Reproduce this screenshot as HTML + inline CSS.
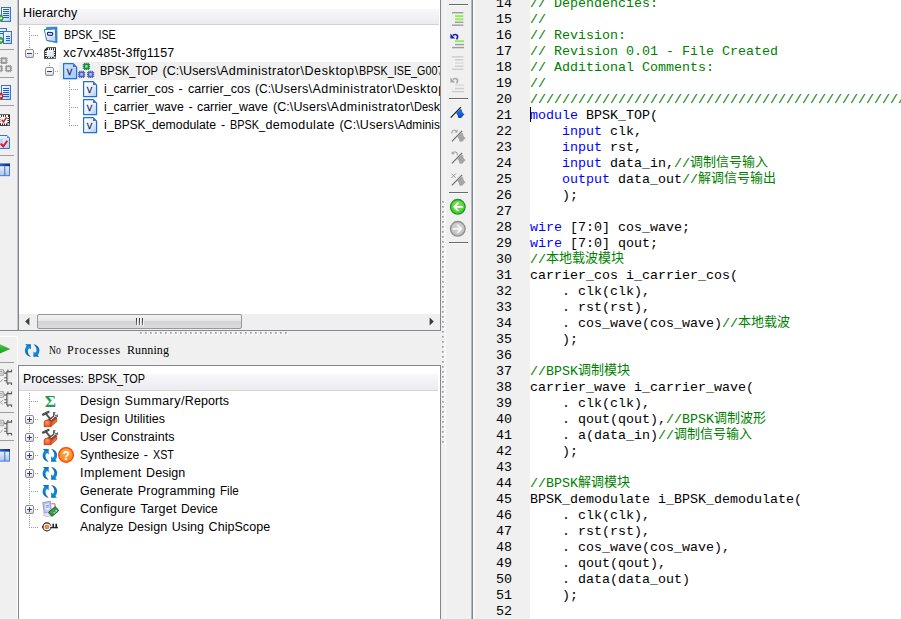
<!DOCTYPE html>
<html lang="zh"><head><meta charset="utf-8"><title>ISE Project Navigator</title>
<style>
html,body{margin:0;padding:0;}
body{width:901px;height:619px;overflow:hidden;background:#f0f0f0;position:relative;font-family:"Liberation Sans", "Noto Sans CJK SC", sans-serif;font-size:12.5px;color:#000;}
.abs{position:absolute;}
.ui{position:absolute;white-space:pre;line-height:18px;height:18px;}
.code{position:absolute;left:530px;white-space:pre;font-family:"Liberation Mono", "Noto Sans CJK SC", monospace;font-size:13.3333px;line-height:16px;height:16px;color:#000;}
.ln{position:absolute;left:474px;width:38px;text-align:right;font-family:"Liberation Mono", "Noto Sans CJK SC", monospace;font-size:13.3333px;line-height:16px;height:16px;color:#000;}
.c{color:#008000;} .k{color:#0000ff;} .z{color:#008000;font-size:13px;line-height:0;position:relative;top:-1.5px;font-family:"Liberation Sans","Noto Sans CJK SC",sans-serif;}
svg{position:absolute;overflow:visible;}
</style></head><body>


<!-- left tool strip -->
<div class="abs" style="left:17px;top:0;width:1px;height:331px;background:#c3c6cb;"></div>
<div class="abs" style="left:18px;top:0;width:1px;height:331px;background:#7f8590;"></div>
<div class="abs" style="left:0;top:330px;width:441px;height:1px;background:#828790;"></div>
<!-- hierarchy panel -->
<div class="abs" id="hier" style="left:19px;top:0;width:421px;height:330px;background:#fff;"></div>
<div class="abs" style="left:440px;top:0;width:1px;height:331px;background:#828790;"></div>
<div class="abs" style="left:19px;top:9px;width:420px;height:15px;background:linear-gradient(#f8f8fa,#ececf0);"></div>
<div class="abs" style="left:19px;top:24px;width:420px;height:1px;background:#d2d2d2;"></div>

<div class="abs" style="left:59px;top:62px;width:381px;height:18px;background:#f0f0f0;"></div>
<div class="abs" style="left:19px;top:25px;width:421px;height:289px;overflow:hidden;">
<span class="ui" style="left:44.7px;top:1.0px;transform-origin:0 0;transform:scaleX(0.8552);">BPSK_ISE</span>
<span class="ui" style="left:44.3px;top:19.0px;letter-spacing:0.179px;">xc7vx485t-3ffg1157</span>
<span class="ui" style="left:81.0px;top:37.0px;transform-origin:0 0;transform:scaleX(0.8787);">BPSK_TOP </span><span class="ui" style="left:143.4px;top:37.0px;letter-spacing:0.135px;">(C:\Users\</span><span class="ui" style="left:201.0px;top:37.0px;letter-spacing:0.521px;">Administrator\</span><span class="ui" style="left:285.4px;top:37.0px;letter-spacing:0.632px;">Desktop\</span><span class="ui" style="left:339.8px;top:37.0px;transform-origin:0 0;transform:scaleX(0.8612);">BPSK_ISE_G00</span><span class="ui" style="left:418.2px;top:37.0px;letter-spacing:0.5px;">7</span>
<span class="ui" style="left:85.0px;top:55.0px;transform-origin:0 0;transform:scaleX(0.9754);">i_carrier_cos </span><span class="ui" style="left:159.4px;top:55.0px;letter-spacing:0.828px;">- </span><span class="ui" style="left:169.0px;top:55.0px;letter-spacing:0.052px;">carrier_cos </span><span class="ui" style="left:236.0px;top:55.0px;transform-origin:0 0;transform:scaleX(0.9632);">(C:\</span><span class="ui" style="left:255.4px;top:55.0px;letter-spacing:0.312px;">Users\</span><span class="ui" style="left:293.4px;top:55.0px;letter-spacing:0.492px;">Administrator\</span><span class="ui" style="left:377.4px;top:55.0px;letter-spacing:0.482px;">Deskto</span><span class="ui" style="left:419.2px;top:55.0px;letter-spacing:0.5px;">p\BPSK</span>
<span class="ui" style="left:85.0px;top:73.0px;transform-origin:0 0;transform:scaleX(0.9818);">i_carrier_wave </span><span class="ui" style="left:169.4px;top:73.0px;letter-spacing:0.228px;">- </span><span class="ui" style="left:178.4px;top:73.0px;transform-origin:0 0;transform:scaleX(0.9907);">carrier_wave </span><span class="ui" style="left:253.9px;top:73.0px;letter-spacing:0.090px;">(C:\</span><span class="ui" style="left:274.4px;top:73.0px;letter-spacing:0.179px;">Users\</span><span class="ui" style="left:311.6px;top:73.0px;letter-spacing:0.464px;">Administrator\</span><span class="ui" style="left:395.2px;top:73.0px;transform-origin:0 0;transform:scaleX(0.8815);">Des</span><span class="ui" style="left:414.8px;top:73.0px;letter-spacing:0.5px;">ktop\</span>
<span class="ui" style="left:85.0px;top:91.0px;letter-spacing:0.333px;">i_</span><span class="ui" style="left:95.4px;top:91.0px;transform-origin:0 0;transform:scaleX(0.9426);">BPSK_</span><span class="ui" style="left:133.4px;top:91.0px;transform-origin:0 0;transform:scaleX(0.9797);">demodulate </span><span class="ui" style="left:202.0px;top:91.0px;letter-spacing:0.628px;">- </span><span class="ui" style="left:211.4px;top:91.0px;transform-origin:0 0;transform:scaleX(0.8682);">BPSK_</span><span class="ui" style="left:246.4px;top:91.0px;letter-spacing:0.407px;">demodulate </span><span class="ui" style="left:320.4px;top:91.0px;letter-spacing:0.065px;">(C:\</span><span class="ui" style="left:340.8px;top:91.0px;letter-spacing:0.346px;">Users\</span><span class="ui" style="left:379.0px;top:91.0px;transform-origin:0 0;transform:scaleX(0.9400);">Adminis</span><span class="ui" style="left:420.8px;top:91.0px;letter-spacing:0.5px;">trator</span>
</div>
<span class="ui" style="left:23.0px;top:3.5px;letter-spacing:0.100px;">Hierarchy</span>

<div class="abs" style="left:19px;top:314px;width:421px;height:16px;background:#efefef;"></div>
<div class="abs" style="left:37px;top:314px;width:205px;height:15px;box-sizing:border-box;border:1px solid #979797;border-radius:2px;background:linear-gradient(#f4f4f4 0%,#e6e6e6 45%,#d4d4d4 50%,#dcdcdc 100%);"></div>


<div class="abs" style="left:17px;top:336px;width:1px;height:283px;background:#fff;"></div>
<div class="abs" style="left:0;top:336px;width:18px;height:1px;background:#fff;"></div>
<div class="abs" style="left:0;top:343px;width:300px;height:14px;font-family:'Liberation Serif','Noto Serif CJK SC',serif;font-size:12px;line-height:14px;white-space:pre;color:#000;">
<span class="abs" style="left:49px;top:0;transform-origin:0 0;transform:scaleX(0.8);">No</span>
<span class="abs" style="left:67px;top:0;letter-spacing:0.8px;">Processes</span>
<span class="abs" style="left:127px;top:0;letter-spacing:0.1px;">Running</span>
</div>
<!-- processes panel -->
<div class="abs" style="left:18px;top:365px;width:423px;height:254px;background:#828790;"></div>
<div class="abs" style="left:19px;top:366px;width:421px;height:253px;background:#fff;"></div>
<div class="abs" style="left:19px;top:374px;width:419px;height:16px;background:linear-gradient(#f8f8fa,#ececf0);"></div>
<div class="abs" style="left:19px;top:390px;width:419px;height:1px;background:#d6d6d6;"></div>

<span class="ui" style="left:22.8px;top:370.3px;transform-origin:0 0;transform:scaleX(0.9864);">Processes: </span><span class="ui" style="left:88.4px;top:370.3px;transform-origin:0 0;transform:scaleX(0.8665);">BPSK_TOP</span>
<span class="ui" style="left:80.1px;top:392.0px;letter-spacing:0.130px;">Design </span><span class="ui" style="left:124.4px;top:392.0px;letter-spacing:0.431px;">Summary/</span><span class="ui" style="left:184.8px;top:392.0px;letter-spacing:0.086px;">Reports</span>
<span class="ui" style="left:80.1px;top:410.0px;letter-spacing:0.130px;">Design </span><span class="ui" style="left:124.4px;top:410.0px;letter-spacing:0.038px;">Utilities</span>
<span class="ui" style="left:80.1px;top:428.0px;transform-origin:0 0;transform:scaleX(0.9884);">User </span><span class="ui" style="left:110.8px;top:428.0px;letter-spacing:0.037px;">Constraints</span>
<span class="ui" style="left:79.9px;top:446.0px;transform-origin:0 0;transform:scaleX(0.9696);">Synthesize </span><span class="ui" style="left:143.8px;top:446.0px;letter-spacing:0.328px;">- </span><span class="ui" style="left:152.9px;top:446.0px;transform-origin:0 0;transform:scaleX(0.8596);">XST</span>
<span class="ui" style="left:80.1px;top:464.0px;letter-spacing:0.338px;">Implement </span><span class="ui" style="left:146.1px;top:464.0px;letter-spacing:0.036px;">Design</span>
<span class="ui" style="left:79.9px;top:482.0px;letter-spacing:0.134px;">Generate </span><span class="ui" style="left:137.7px;top:482.0px;letter-spacing:0.243px;">Programming </span><span class="ui" style="left:220.0px;top:482.0px;transform-origin:0 0;transform:scaleX(0.9278);">File</span>
<span class="ui" style="left:79.9px;top:500.0px;letter-spacing:0.189px;">Configure </span><span class="ui" style="left:140.4px;top:500.0px;letter-spacing:0.275px;">Target </span><span class="ui" style="left:181.4px;top:500.0px;transform-origin:0 0;transform:scaleX(0.9629);">Device</span>
<span class="ui" style="left:79.9px;top:518.0px;transform-origin:0 0;transform:scaleX(0.9756);">Analyze </span><span class="ui" style="left:127.9px;top:518.0px;letter-spacing:0.063px;">Design </span><span class="ui" style="left:171.8px;top:518.0px;letter-spacing:0.046px;">Using </span><span class="ui" style="left:208.6px;top:518.0px;letter-spacing:0.043px;">ChipScope</span>

<div class="abs" style="left:471px;top:0;width:1px;height:619px;background:#b4b7bc;"></div>
<div class="abs" style="left:472px;top:0;width:1px;height:619px;background:#7f848d;"></div>
<div class="abs" style="left:473px;top:0;width:2px;height:619px;background:#f8f8f8;"></div>
<div class="abs" style="left:530px;top:0;width:371px;height:619px;background:#fff;"></div>

<div class="ln" style="top:-4px;">14</div>
<div class="code" style="top:-4px;"><span class="c">// Dependencies:</span></div>
<div class="ln" style="top:12px;">15</div>
<div class="code" style="top:12px;"><span class="c">//</span></div>
<div class="ln" style="top:28px;">16</div>
<div class="code" style="top:28px;"><span class="c">// Revision:</span></div>
<div class="ln" style="top:44px;">17</div>
<div class="code" style="top:44px;"><span class="c">// Revision 0.01 - File Created</span></div>
<div class="ln" style="top:60px;">18</div>
<div class="code" style="top:60px;"><span class="c">// Additional Comments:</span></div>
<div class="ln" style="top:76px;">19</div>
<div class="code" style="top:76px;"><span class="c">//</span></div>
<div class="ln" style="top:92px;">20</div>
<div class="code" style="top:92px;"><span class="c">//////////////////////////////////////////////////////////////////////////////////</span></div>
<div class="ln" style="top:108px;">21</div>
<div class="code" style="top:108px;"><span class="k">module</span> BPSK_TOP(</div>
<div class="ln" style="top:124px;">22</div>
<div class="code" style="top:124px;">    <span class="k">input</span> clk,</div>
<div class="ln" style="top:140px;">23</div>
<div class="code" style="top:140px;">    <span class="k">input</span> rst,</div>
<div class="ln" style="top:156px;">24</div>
<div class="code" style="top:156px;">    <span class="k">input</span> data_in,<span class="c">//</span><span class="z">调制信号输入</span></div>
<div class="ln" style="top:172px;">25</div>
<div class="code" style="top:172px;">    <span class="k">output</span> data_out<span class="c">//</span><span class="z">解调信号输出</span></div>
<div class="ln" style="top:188px;">26</div>
<div class="code" style="top:188px;">    );</div>
<div class="ln" style="top:204px;">27</div>
<div class="ln" style="top:220px;">28</div>
<div class="code" style="top:220px;"><span class="k">wire</span> [7:0] cos_wave;</div>
<div class="ln" style="top:236px;">29</div>
<div class="code" style="top:236px;"><span class="k">wire</span> [7:0] qout;</div>
<div class="ln" style="top:252px;">30</div>
<div class="code" style="top:252px;"><span class="c">//</span><span class="z">本地载波模块</span></div>
<div class="ln" style="top:268px;">31</div>
<div class="code" style="top:268px;">carrier_cos i_carrier_cos(</div>
<div class="ln" style="top:284px;">32</div>
<div class="code" style="top:284px;">    . clk(clk),</div>
<div class="ln" style="top:300px;">33</div>
<div class="code" style="top:300px;">    . rst(rst),</div>
<div class="ln" style="top:316px;">34</div>
<div class="code" style="top:316px;">    . cos_wave(cos_wave)<span class="c">//</span><span class="z">本地载波</span></div>
<div class="ln" style="top:332px;">35</div>
<div class="code" style="top:332px;">    );</div>
<div class="ln" style="top:348px;">36</div>
<div class="ln" style="top:364px;">37</div>
<div class="code" style="top:364px;"><span class="c">//BPSK</span><span class="z">调制模块</span></div>
<div class="ln" style="top:380px;">38</div>
<div class="code" style="top:380px;">carrier_wave i_carrier_wave(</div>
<div class="ln" style="top:396px;">39</div>
<div class="code" style="top:396px;">    . clk(clk),</div>
<div class="ln" style="top:412px;">40</div>
<div class="code" style="top:412px;">    . qout(qout),<span class="c">//BPSK</span><span class="z">调制波形</span></div>
<div class="ln" style="top:428px;">41</div>
<div class="code" style="top:428px;">    . a(data_in)<span class="c">//</span><span class="z">调制信号输入</span></div>
<div class="ln" style="top:444px;">42</div>
<div class="code" style="top:444px;">    );</div>
<div class="ln" style="top:460px;">43</div>
<div class="ln" style="top:476px;">44</div>
<div class="code" style="top:476px;"><span class="c">//BPSK</span><span class="z">解调模块</span></div>
<div class="ln" style="top:492px;">45</div>
<div class="code" style="top:492px;">BPSK_demodulate i_BPSK_demodulate(</div>
<div class="ln" style="top:508px;">46</div>
<div class="code" style="top:508px;">    . clk(clk),</div>
<div class="ln" style="top:524px;">47</div>
<div class="code" style="top:524px;">    . rst(rst),</div>
<div class="ln" style="top:540px;">48</div>
<div class="code" style="top:540px;">    . cos_wave(cos_wave),</div>
<div class="ln" style="top:556px;">49</div>
<div class="code" style="top:556px;">    . qout(qout),</div>
<div class="ln" style="top:572px;">50</div>
<div class="code" style="top:572px;">    . data(data_out)</div>
<div class="ln" style="top:588px;">51</div>
<div class="code" style="top:588px;">    );</div>
<div class="ln" style="top:604px;">52</div>
<div class="abs" style="left:530px;top:107px;width:1px;height:15px;background:#000;"></div>
<svg width="901" height="619" viewBox="0 0 901 619" style="left:0;top:0;">
<defs>
<linearGradient id="gdoc" x1="0" y1="0" x2="1" y2="1"><stop offset="0" stop-color="#ffffff"/><stop offset="1" stop-color="#b3cdf1"/></linearGradient>
<linearGradient id="gbox" x1="0" y1="0" x2="0" y2="1"><stop offset="0" stop-color="#ffffff"/><stop offset="0.5" stop-color="#f4f4f4"/><stop offset="1" stop-color="#cfcfcf"/></linearGradient>
<linearGradient id="gplay" x1="0" y1="0" x2="0" y2="1"><stop offset="0" stop-color="#55d455"/><stop offset="1" stop-color="#0b8f12"/></linearGradient>
<radialGradient id="ggreen" cx="0.5" cy="0.4" r="0.7"><stop offset="0" stop-color="#86e660"/><stop offset="0.7" stop-color="#52cc3a"/><stop offset="1" stop-color="#2aa824"/></radialGradient>
<radialGradient id="ggray" cx="0.5" cy="0.4" r="0.7"><stop offset="0" stop-color="#d6d6d6"/><stop offset="0.7" stop-color="#c2c2c2"/><stop offset="1" stop-color="#a2a2a2"/></radialGradient>
<linearGradient id="gtab" x1="0" y1="0" x2="0" y2="1"><stop offset="0" stop-color="#f4f8ff"/><stop offset="1" stop-color="#a9c6ee"/></linearGradient>
<linearGradient id="gtabh" x1="0" y1="0" x2="1" y2="0"><stop offset="0" stop-color="#2f6fe0"/><stop offset="1" stop-color="#0c2a8c"/></linearGradient>
<linearGradient id="gtool" x1="0" y1="0" x2="0" y2="1"><stop offset="0" stop-color="#f58a5a"/><stop offset="1" stop-color="#d8431a"/></linearGradient>
<linearGradient id="gv" x1="0" y1="0" x2="1" y2="1"><stop offset="0" stop-color="#ffffff"/><stop offset="0.5" stop-color="#eef4fd"/><stop offset="1" stop-color="#a9c8f0"/></linearGradient>
<linearGradient id="gvs" x1="0" y1="0" x2="1" y2="1"><stop offset="0" stop-color="#d4e5fb"/><stop offset="1" stop-color="#a5c9f4"/></linearGradient>
<linearGradient id="gsync" x1="0" y1="0" x2="0" y2="1"><stop offset="0" stop-color="#0a6cc0"/><stop offset="0.25" stop-color="#0c90dc"/><stop offset="1" stop-color="#0a5eb2"/></linearGradient>
<radialGradient id="gtoolr" cx="0.45" cy="0.35" r="0.8"><stop offset="0" stop-color="#fb9a5a"/><stop offset="1" stop-color="#d8431a"/></radialGradient>
<radialGradient id="gq" cx="0.5" cy="0.35" r="0.75"><stop offset="0" stop-color="#fbb040"/><stop offset="1" stop-color="#f57a1a"/></radialGradient>
</defs>
<g stroke="#9a9a9a" stroke-width="1" stroke-dasharray="1 1" shape-rendering="crispEdges" fill="none">
<line x1="29.5" y1="27" x2="29.5" y2="48"/>
<line x1="31" y1="35.5" x2="38" y2="35.5"/>
<line x1="35" y1="53.5" x2="38" y2="53.5"/>
<line x1="49.5" y1="63" x2="49.5" y2="66"/>
<line x1="55" y1="71.5" x2="58" y2="71.5"/>
<line x1="69.5" y1="81" x2="69.5" y2="126"/>
<line x1="71" y1="89.5" x2="78" y2="89.5"/>
<line x1="71" y1="107.5" x2="78" y2="107.5"/>
<line x1="71" y1="125.5" x2="78" y2="125.5"/>
<line x1="29.5" y1="393" x2="29.5" y2="528"/>
<line x1="31" y1="401.5" x2="38" y2="401.5"/>
<line x1="31" y1="491.5" x2="38" y2="491.5"/>
<line x1="31" y1="527.5" x2="38" y2="527.5"/>
<line x1="35" y1="419.5" x2="38" y2="419.5"/>
<line x1="35" y1="437.5" x2="38" y2="437.5"/>
<line x1="35" y1="455.5" x2="38" y2="455.5"/>
<line x1="35" y1="473.5" x2="38" y2="473.5"/>
<line x1="35" y1="509.5" x2="38" y2="509.5"/>
</g>
<rect x="25.5" y="49.5" width="8" height="8" rx="1.5" fill="url(#gbox)" stroke="#8e8e8e"/>
<line x1="27" y1="53.5" x2="32" y2="53.5" stroke="#2a3c96" stroke-width="1" shape-rendering="crispEdges"/>
<rect x="45.5" y="67.5" width="8" height="8" rx="1.5" fill="url(#gbox)" stroke="#8e8e8e"/>
<line x1="47" y1="71.5" x2="52" y2="71.5" stroke="#2a3c96" stroke-width="1" shape-rendering="crispEdges"/>
<rect x="25.5" y="415.5" width="8" height="8" rx="1.5" fill="url(#gbox)" stroke="#8e8e8e"/>
<line x1="27" y1="419.5" x2="32" y2="419.5" stroke="#2a3c96" stroke-width="1" shape-rendering="crispEdges"/>
<line x1="29.5" y1="417" x2="29.5" y2="422" stroke="#2a3c96" stroke-width="1" shape-rendering="crispEdges"/>
<rect x="25.5" y="433.5" width="8" height="8" rx="1.5" fill="url(#gbox)" stroke="#8e8e8e"/>
<line x1="27" y1="437.5" x2="32" y2="437.5" stroke="#2a3c96" stroke-width="1" shape-rendering="crispEdges"/>
<line x1="29.5" y1="435" x2="29.5" y2="440" stroke="#2a3c96" stroke-width="1" shape-rendering="crispEdges"/>
<rect x="25.5" y="451.5" width="8" height="8" rx="1.5" fill="url(#gbox)" stroke="#8e8e8e"/>
<line x1="27" y1="455.5" x2="32" y2="455.5" stroke="#2a3c96" stroke-width="1" shape-rendering="crispEdges"/>
<line x1="29.5" y1="453" x2="29.5" y2="458" stroke="#2a3c96" stroke-width="1" shape-rendering="crispEdges"/>
<rect x="25.5" y="469.5" width="8" height="8" rx="1.5" fill="url(#gbox)" stroke="#8e8e8e"/>
<line x1="27" y1="473.5" x2="32" y2="473.5" stroke="#2a3c96" stroke-width="1" shape-rendering="crispEdges"/>
<line x1="29.5" y1="471" x2="29.5" y2="476" stroke="#2a3c96" stroke-width="1" shape-rendering="crispEdges"/>
<rect x="25.5" y="505.5" width="8" height="8" rx="1.5" fill="url(#gbox)" stroke="#8e8e8e"/>
<line x1="27" y1="509.5" x2="32" y2="509.5" stroke="#2a3c96" stroke-width="1" shape-rendering="crispEdges"/>
<line x1="29.5" y1="507" x2="29.5" y2="512" stroke="#2a3c96" stroke-width="1" shape-rendering="crispEdges"/>
<path d="M63.6 63.6 h9.5 l3.5 3.5 v11.5 h-13 z" fill="url(#gvs)" stroke="#1e6fdc" stroke-width="1.2" stroke-linejoin="round"/>
<path d="M73 63.4 v3.6 h3.6 z" fill="#5a68b8"/>
<text transform="translate(69.5 74.9) scale(0.84 1)" font-family="Liberation Sans, sans-serif" font-size="9.8" fill="#081850" stroke="#081850" stroke-width="0.25" text-anchor="middle">V</text>
<path d="M83.6 81.6 h9.5 l3.5 3.5 v11.5 h-13 z" fill="url(#gv)" stroke="#1e6fdc" stroke-width="1.2" stroke-linejoin="round"/>
<path d="M93 81.4 v3.6 h3.6 z" fill="#5a68b8"/>
<text transform="translate(89.5 92.9) scale(0.84 1)" font-family="Liberation Sans, sans-serif" font-size="9.8" fill="#081850" stroke="#081850" stroke-width="0.25" text-anchor="middle">V</text>
<path d="M83.6 99.6 h9.5 l3.5 3.5 v11.5 h-13 z" fill="url(#gv)" stroke="#1e6fdc" stroke-width="1.2" stroke-linejoin="round"/>
<path d="M93 99.4 v3.6 h3.6 z" fill="#5a68b8"/>
<text transform="translate(89.5 110.9) scale(0.84 1)" font-family="Liberation Sans, sans-serif" font-size="9.8" fill="#081850" stroke="#081850" stroke-width="0.25" text-anchor="middle">V</text>
<path d="M83.6 117.6 h9.5 l3.5 3.5 v11.5 h-13 z" fill="url(#gv)" stroke="#1e6fdc" stroke-width="1.2" stroke-linejoin="round"/>
<path d="M93 117.4 v3.6 h3.6 z" fill="#5a68b8"/>
<text transform="translate(89.5 128.9) scale(0.84 1)" font-family="Liberation Sans, sans-serif" font-size="9.8" fill="#081850" stroke="#081850" stroke-width="0.25" text-anchor="middle">V</text>
<g fill="#12913a">
<rect x="84.05" y="62.80" width="1.15" height="7.2"/>
<rect x="82.80" y="64.05" width="7.2" height="1.15"/>
<rect x="85.85" y="62.80" width="1.15" height="7.2"/>
<rect x="82.80" y="65.85" width="7.2" height="1.15"/>
<rect x="87.65" y="62.80" width="1.15" height="7.2"/>
<rect x="82.80" y="67.65" width="7.2" height="1.15"/>
<rect x="83.70" y="63.70" width="5.4" height="5.4"/>
</g>
<rect x="85.10" y="65.10" width="2.6" height="2.6" fill="#9ed6a6"/>
<g fill="#4a63c4">
<rect x="79.25" y="70.80" width="1.15" height="7.2"/>
<rect x="78.00" y="72.05" width="7.2" height="1.15"/>
<rect x="81.05" y="70.80" width="1.15" height="7.2"/>
<rect x="78.00" y="73.85" width="7.2" height="1.15"/>
<rect x="82.85" y="70.80" width="1.15" height="7.2"/>
<rect x="78.00" y="75.65" width="7.2" height="1.15"/>
<rect x="78.90" y="71.70" width="5.4" height="5.4"/>
</g>
<rect x="80.30" y="73.10" width="2.6" height="2.6" fill="#b4c6ee"/>
<g fill="#4a63c4">
<rect x="88.25" y="70.80" width="1.15" height="7.2"/>
<rect x="87.00" y="72.05" width="7.2" height="1.15"/>
<rect x="90.05" y="70.80" width="1.15" height="7.2"/>
<rect x="87.00" y="73.85" width="7.2" height="1.15"/>
<rect x="91.85" y="70.80" width="1.15" height="7.2"/>
<rect x="87.00" y="75.65" width="7.2" height="1.15"/>
<rect x="87.90" y="71.70" width="5.4" height="5.4"/>
</g>
<rect x="89.30" y="73.10" width="2.6" height="2.6" fill="#b4c6ee"/>
<path d="M46.4 27.3 L57 27 L57.1 42.8 L47 40.6 Z" fill="#3f90dc" stroke="#1d6fc4" stroke-width="0.6" stroke-linejoin="round"/>
<path d="M44.4 29.6 L55.3 28.9 L56 41.9 L46.6 40.4 Z" fill="url(#gdoc)" stroke="#2a7bd0" stroke-width="1" stroke-linejoin="round"/>
<path d="M45.4 30.4 L54.5 29.8 L55 36 L46 36.4 Z" fill="#ffffff" opacity="0.75"/>
<rect x="47.5" y="32.4" width="5.2" height="2.8" rx="0.9" fill="#fff" stroke="#1b2a86" stroke-width="1.2" transform="rotate(4 50 33.8)"/>
<path d="M47 47.2 H56 V58.8 H44.2 V50 Z" fill="#2b2b2b"/>
<rect x="46.8" y="50" width="6.9" height="6.6" fill="#f2f7fd"/>
<rect x="49" y="52" width="4.7" height="4.6" fill="#dfeaf8"/>
<g fill="#f4f4f4" shape-rendering="crispEdges"><rect x="48.2" y="48.2" width="0.9" height="1.9"/><rect x="50" y="48.2" width="0.9" height="1.9"/><rect x="51.8" y="48.2" width="0.9" height="1.9"/><rect x="53.6" y="48.2" width="0.9" height="1.9"/><rect x="45.8" y="56.5" width="0.9" height="1.6"/><rect x="47.6" y="56.5" width="0.9" height="1.6"/><rect x="49.4" y="56.5" width="0.9" height="1.6"/><rect x="51.2" y="56.5" width="0.9" height="1.6"/><rect x="45.1" y="51.3" width="1.8" height="0.9"/><rect x="45.1" y="53.2" width="1.8" height="0.9"/><rect x="45.1" y="55.1" width="1.8" height="0.9"/><rect x="53.6" y="50.2" width="1.7" height="0.9"/><rect x="53.6" y="52.1" width="1.7" height="0.9"/><rect x="53.6" y="54" width="1.7" height="0.9"/></g>
<rect x="53.6" y="56.4" width="1.9" height="1.9" fill="#bfe0fb"/>
<g transform="translate(42.7 449.1) scale(1.0)">
<path d="M0.2 0 H6 V5.4 L4.5 4 L3.5 4.7 C2.2 6.6 2.6 9.8 6 12.6 C1.5 12.2 -0.6 8 0 5.6 C0.2 3.8 0.9 2.6 1.7 1.6 Z" fill="url(#gsync)"/>
<g transform="rotate(180 7.2 6.3)"><path d="M0.2 0 H6 V5.4 L4.5 4 L3.5 4.7 C2.2 6.6 2.6 9.8 6 12.6 C1.5 12.2 -0.6 8 0 5.6 C0.2 3.8 0.9 2.6 1.7 1.6 Z" fill="url(#gsync)"/></g>
</g>
<g transform="translate(42.7 467.1) scale(1.0)">
<path d="M0.2 0 H6 V5.4 L4.5 4 L3.5 4.7 C2.2 6.6 2.6 9.8 6 12.6 C1.5 12.2 -0.6 8 0 5.6 C0.2 3.8 0.9 2.6 1.7 1.6 Z" fill="url(#gsync)"/>
<g transform="rotate(180 7.2 6.3)"><path d="M0.2 0 H6 V5.4 L4.5 4 L3.5 4.7 C2.2 6.6 2.6 9.8 6 12.6 C1.5 12.2 -0.6 8 0 5.6 C0.2 3.8 0.9 2.6 1.7 1.6 Z" fill="url(#gsync)"/></g>
</g>
<g transform="translate(42.7 485.1) scale(1.0)">
<path d="M0.2 0 H6 V5.4 L4.5 4 L3.5 4.7 C2.2 6.6 2.6 9.8 6 12.6 C1.5 12.2 -0.6 8 0 5.6 C0.2 3.8 0.9 2.6 1.7 1.6 Z" fill="url(#gsync)"/>
<g transform="rotate(180 7.2 6.3)"><path d="M0.2 0 H6 V5.4 L4.5 4 L3.5 4.7 C2.2 6.6 2.6 9.8 6 12.6 C1.5 12.2 -0.6 8 0 5.6 C0.2 3.8 0.9 2.6 1.7 1.6 Z" fill="url(#gsync)"/></g>
</g>
<g transform="translate(25 344.2) scale(1.0)">
<path d="M0.2 0 H6 V5.4 L4.5 4 L3.5 4.7 C2.2 6.6 2.6 9.8 6 12.6 C1.5 12.2 -0.6 8 0 5.6 C0.2 3.8 0.9 2.6 1.7 1.6 Z" fill="url(#gsync)"/>
<g transform="rotate(180 7.2 6.3)"><path d="M0.2 0 H6 V5.4 L4.5 4 L3.5 4.7 C2.2 6.6 2.6 9.8 6 12.6 C1.5 12.2 -0.6 8 0 5.6 C0.2 3.8 0.9 2.6 1.7 1.6 Z" fill="url(#gsync)"/></g>
</g>
<circle cx="66.05" cy="454.95" r="7.35" fill="url(#gq)" stroke="#fb4310" stroke-width="1.3"/>
<text x="66.1" y="459.9" font-family="Liberation Sans, sans-serif" font-weight="bold" font-size="12" fill="#fff" text-anchor="middle">?</text>
<text x="50.5" y="407" font-family="Liberation Serif, serif" font-weight="bold" font-size="17" fill="#1f9a50" text-anchor="middle" textLength="11.3" lengthAdjust="spacingAndGlyphs">Σ</text>
<g transform="translate(41.8 411)">
<path d="M5.6 9 L11.4 5.2 Q14.6 5.2 15 7.4 L9 11.5 Q8.8 9 5.6 9 Z" fill="#cf3f16" stroke="#b32a0c" stroke-width="0.5" stroke-linejoin="round"/>
<path d="M9 11.4 L15 7.3 V10.6 L9 15.7 Z" fill="#e2551f" stroke="#b32a0c" stroke-width="0.5" stroke-linejoin="round"/>
<path d="M9.8 12.2 L14.6 8.7 M9.8 14 L14.6 10" stroke="#f7a266" stroke-width="0.8" stroke-dasharray="0.8 0.8" fill="none"/>
<path d="M2.3 15.7 V11.5 Q2.3 9 5.6 9 Q9 9 9 11.5 V15.7 Z" fill="url(#gtoolr)" stroke="#b8300e" stroke-width="0.7" stroke-linejoin="round"/>
<path d="M3.8 2.4 L9.2 8.8" stroke="#505050" stroke-width="1.9" fill="none"/>
<path d="M1.2 3.6 L6.6 1" stroke="#444" stroke-width="2.3" fill="none" stroke-linecap="round"/>
<path d="M1 3.4 L6.4 0.8" stroke="#8c8c8c" stroke-width="0.7" fill="none" stroke-dasharray="0.8 0.8"/>
<path d="M8.7 9.3 L13.6 4.9" stroke="#30343a" stroke-width="2.6" fill="none"/>
<path d="M11.3 4.8 L11.2 1.3 H13.8 L12.9 3.4 L14.4 4.4 L15.9 3 L16 6 L13.2 6.4 Z" fill="#3a3e44"/>
<path d="M8.9 9.1 L13.4 5.1" stroke="#dfe8f1" stroke-width="1.1" fill="none"/>
<path d="M12 4.6 L12 2 H12.8 L12.2 3.7 L14.4 5.2 L15.3 4.5 L15.3 5.4 L13 5.8 Z" fill="#d5dee8"/>
</g>
<g transform="translate(41.8 429)">
<path d="M5.6 9 L11.4 5.2 Q14.6 5.2 15 7.4 L9 11.5 Q8.8 9 5.6 9 Z" fill="#cf3f16" stroke="#b32a0c" stroke-width="0.5" stroke-linejoin="round"/>
<path d="M9 11.4 L15 7.3 V10.6 L9 15.7 Z" fill="#e2551f" stroke="#b32a0c" stroke-width="0.5" stroke-linejoin="round"/>
<path d="M9.8 12.2 L14.6 8.7 M9.8 14 L14.6 10" stroke="#f7a266" stroke-width="0.8" stroke-dasharray="0.8 0.8" fill="none"/>
<path d="M2.3 15.7 V11.5 Q2.3 9 5.6 9 Q9 9 9 11.5 V15.7 Z" fill="url(#gtoolr)" stroke="#b8300e" stroke-width="0.7" stroke-linejoin="round"/>
<path d="M3.8 2.4 L9.2 8.8" stroke="#505050" stroke-width="1.9" fill="none"/>
<path d="M1.2 3.6 L6.6 1" stroke="#444" stroke-width="2.3" fill="none" stroke-linecap="round"/>
<path d="M1 3.4 L6.4 0.8" stroke="#8c8c8c" stroke-width="0.7" fill="none" stroke-dasharray="0.8 0.8"/>
<path d="M8.7 9.3 L13.6 4.9" stroke="#30343a" stroke-width="2.6" fill="none"/>
<path d="M11.3 4.8 L11.2 1.3 H13.8 L12.9 3.4 L14.4 4.4 L15.9 3 L16 6 L13.2 6.4 Z" fill="#3a3e44"/>
<path d="M8.9 9.1 L13.4 5.1" stroke="#dfe8f1" stroke-width="1.1" fill="none"/>
<path d="M12 4.6 L12 2 H12.8 L12.2 3.7 L14.4 5.2 L15.3 4.5 L15.3 5.4 L13 5.8 Z" fill="#d5dee8"/>
</g>
<g transform="translate(41.8 500.8)">
<path d="M1 1.8 L8.6 0.4 L9.6 11 L2.4 12 Z" fill="#c9c9ee" stroke="#8a86c8" stroke-width="0.8" stroke-linejoin="round"/>
<path d="M2.6 3 L7.6 2.1 L8.2 9.2 L3.6 9.9 Z" fill="#e6efff" stroke="#9aa6e0" stroke-width="0.5"/>
<path d="M4 5 L7 4.4 M4.2 6.6 L7.2 6" stroke="#5a78d0" stroke-width="0.8"/>
<path d="M2 12.4 Q5.5 11.2 9.4 12.2 L9.8 15 Q5.6 16.4 2.2 15 Z" fill="#e4e4f4" stroke="#a6a4d0" stroke-width="0.6"/>
<path d="M9.6 3 H13.2 V7" fill="none" stroke="#d0408a" stroke-width="0.9"/>
<rect x="7.2" y="8" width="9.2" height="5.4" rx="0.9" fill="#23a02c" stroke="#0e5a16" stroke-width="0.8" transform="rotate(-40 11.8 10.7)"/>
<circle cx="9.8" cy="11.4" r="0.95" fill="#c85ad0"/><circle cx="11.6" cy="9.8" r="0.95" fill="#c85ad0"/><circle cx="12.6" cy="11.8" r="0.95" fill="#a8dcff"/><circle cx="14.4" cy="10" r="0.95" fill="#a8dcff"/>
</g>
<circle cx="46.9" cy="526.9" r="4" fill="#fbfbfb" stroke="#222" stroke-width="1.1"/>
<rect x="42" y="526.2" width="1.2" height="1.5" fill="#222"/>
<rect x="49.6" y="525.6" width="2.2" height="2.8" fill="#fff"/>
<rect x="44.7" y="524.7" width="4.4" height="4.4" rx="1.5" fill="#f4742a"/>
<rect x="45.7" y="525.7" width="2.4" height="2.4" rx="1" fill="#f9955a"/>
<path d="M50.2 527.6 H58" stroke="#222" stroke-width="1.4" fill="none"/>
<rect x="52.4" y="523.7" width="1.6" height="3.4" fill="#222"/><rect x="55.4" y="523.7" width="1.6" height="3.4" fill="#222"/>
</svg>
<svg width="901" height="619" viewBox="0 0 901 619" style="left:0;top:0;">
<defs><linearGradient id="gflag" x1="0" y1="0" x2="0" y2="1"><stop offset="0" stop-color="#2a7ae8"/><stop offset="1" stop-color="#0a44c0"/></linearGradient><linearGradient id="ggrip" x1="0" y1="0" x2="0" y2="1"><stop offset="0" stop-color="#2e2e2e"/><stop offset="1" stop-color="#7a7a7a"/></linearGradient></defs>
<rect x="1.5" y="7.5" width="9" height="14" fill="url(#gdoc)" stroke="#3a72c8" stroke-width="1"/>
<line x1="3" y1="9.5" x2="9" y2="9.5" stroke="#1d5fd2" stroke-width="1" shape-rendering="crispEdges"/>
<line x1="3" y1="11.5" x2="9" y2="11.5" stroke="#1d5fd2" stroke-width="1" shape-rendering="crispEdges"/>
<line x1="3" y1="13.5" x2="9" y2="13.5" stroke="#1d5fd2" stroke-width="1" shape-rendering="crispEdges"/>
<line x1="3" y1="15.5" x2="9" y2="15.5" stroke="#1d5fd2" stroke-width="1" shape-rendering="crispEdges"/>
<line x1="3" y1="17.5" x2="9" y2="17.5" stroke="#1d5fd2" stroke-width="1" shape-rendering="crispEdges"/>
<circle cx="-0.2" cy="18.2" r="3.3" fill="#3fb53a" stroke="#1c7a1c" stroke-width="0.6"/>
<rect x="-2.4000000000000004" y="17.5" width="4.4" height="1.4" fill="#fff"/>
<rect x="-2.5" y="28.5" width="9" height="13" fill="url(#gdoc)" stroke="#3a72c8" stroke-width="1"/>
<line x1="-1" y1="31.5" x2="5" y2="31.5" stroke="#1d5fd2" stroke-width="1" shape-rendering="crispEdges"/>
<line x1="-1" y1="33.5" x2="5" y2="33.5" stroke="#1d5fd2" stroke-width="1" shape-rendering="crispEdges"/>
<rect x="3.5" y="31.5" width="8" height="12" fill="url(#gdoc)" stroke="#3a72c8" stroke-width="1"/>
<line x1="6" y1="36.5" x2="10" y2="36.5" stroke="#1d5fd2" stroke-width="1" shape-rendering="crispEdges"/>
<line x1="6" y1="38.5" x2="10" y2="38.5" stroke="#1d5fd2" stroke-width="1" shape-rendering="crispEdges"/>
<line x1="6" y1="40.5" x2="10" y2="40.5" stroke="#1d5fd2" stroke-width="1" shape-rendering="crispEdges"/>
<circle cx="-0.2" cy="40.5" r="3.3" fill="#3fb53a" stroke="#1c7a1c" stroke-width="0.6"/>
<rect x="-2.4000000000000004" y="39.8" width="4.4" height="1.4" fill="#fff"/>
<line x1="0" y1="49.5" x2="14" y2="49.5" stroke="#9d9d9d" stroke-width="1" shape-rendering="crispEdges"/>
<g fill="#999999">
<rect x="0.00" y="58.10" width="7.8" height="1.0"/>
<rect x="0.00" y="60.10" width="7.8" height="1.0"/>
<rect x="0.00" y="62.10" width="7.8" height="1.0"/>
<rect x="1.00" y="57.30" width="5.8" height="6.6"/>
</g>
<rect x="2.40" y="59.30" width="3" height="2.6" fill="#e6e6e6"/>
<g fill="#999999">
<rect x="-2.95" y="65.00" width="1.15" height="7.2"/>
<rect x="-4.20" y="66.25" width="7.2" height="1.15"/>
<rect x="-1.15" y="65.00" width="1.15" height="7.2"/>
<rect x="-4.20" y="68.05" width="7.2" height="1.15"/>
<rect x="0.65" y="65.00" width="1.15" height="7.2"/>
<rect x="-4.20" y="69.85" width="7.2" height="1.15"/>
<rect x="-3.30" y="65.90" width="5.4" height="5.4"/>
</g>
<rect x="-2.00" y="67.20" width="2.8" height="2.8" fill="#e6e6e6"/>
<g fill="#999999">
<rect x="6.15" y="65.00" width="1.15" height="7.2"/>
<rect x="4.90" y="66.25" width="7.2" height="1.15"/>
<rect x="7.95" y="65.00" width="1.15" height="7.2"/>
<rect x="4.90" y="68.05" width="7.2" height="1.15"/>
<rect x="9.75" y="65.00" width="1.15" height="7.2"/>
<rect x="4.90" y="69.85" width="7.2" height="1.15"/>
<rect x="5.80" y="65.90" width="5.4" height="5.4"/>
</g>
<rect x="7.10" y="67.20" width="2.8" height="2.8" fill="#e6e6e6"/>
<line x1="0" y1="77.5" x2="14" y2="77.5" stroke="#9d9d9d" stroke-width="1" shape-rendering="crispEdges"/>
<rect x="1.5" y="85.5" width="9" height="14" fill="url(#gdoc)" stroke="#3a72c8" stroke-width="1"/>
<line x1="3" y1="88.5" x2="9" y2="88.5" stroke="#1d5fd2" stroke-width="1" shape-rendering="crispEdges"/>
<line x1="3" y1="90.5" x2="9" y2="90.5" stroke="#1d5fd2" stroke-width="1" shape-rendering="crispEdges"/>
<line x1="3" y1="92.5" x2="9" y2="92.5" stroke="#1d5fd2" stroke-width="1" shape-rendering="crispEdges"/>
<line x1="3" y1="94.5" x2="9" y2="94.5" stroke="#1d5fd2" stroke-width="1" shape-rendering="crispEdges"/>
<line x1="3" y1="96.5" x2="9" y2="96.5" stroke="#1d5fd2" stroke-width="1" shape-rendering="crispEdges"/>
<circle cx="-0.2" cy="96.2" r="3.3" fill="#ee2a1c" stroke="#b01008" stroke-width="0.6"/>
<rect x="-2.4000000000000004" y="95.5" width="4.4" height="1.4" fill="#fff"/>
<line x1="0" y1="105.5" x2="14" y2="105.5" stroke="#9d9d9d" stroke-width="1" shape-rendering="crispEdges"/>
<rect x="-2" y="114.3" width="12" height="11.6" fill="#2b2b2b"/>
<rect x="0.4" y="116.8" width="7" height="6.6" fill="#fbfbfb"/>
<g fill="#f2f2f2" shape-rendering="crispEdges"><rect x="0.2" y="115.2" width="0.9" height="1.7"/><rect x="2" y="115.2" width="0.9" height="1.7"/><rect x="3.8" y="115.2" width="0.9" height="1.7"/><rect x="5.6" y="115.2" width="0.9" height="1.7"/><rect x="7.4" y="115.2" width="0.9" height="1.7"/><rect x="-0.6" y="123.3" width="0.9" height="1.7"/><rect x="1.2" y="123.3" width="0.9" height="1.7"/><rect x="3" y="123.3" width="0.9" height="1.7"/><rect x="4.8" y="123.3" width="0.9" height="1.7"/><rect x="7.3" y="117.4" width="1.8" height="0.9"/><rect x="7.3" y="119.2" width="1.8" height="0.9"/><rect x="7.3" y="121" width="1.8" height="0.9"/><rect x="-1.2" y="118.2" width="1.7" height="0.9"/><rect x="-1.2" y="120" width="1.7" height="0.9"/><rect x="-1.2" y="121.8" width="1.7" height="0.9"/></g>
<rect x="7.4" y="123.2" width="2" height="2" fill="#bfe0fb"/>
<path d="M1.7 119.8 L3.5 121.9 L6.5 117.4" fill="none" stroke="#e8141c" stroke-width="1.5"/>
<path d="M-3 135.5 H7 L9.5 138 V148.5 H-3 Z" fill="url(#gdoc)" stroke="#3a72c8" stroke-width="1"/>
<path d="M7 135.5 V138 H9.5 Z" fill="#6f8fd8"/>
<rect x="-2" y="139" width="5" height="6" fill="#b9cdf0" opacity="0.8"/>
<path d="M0.8 143.6 L3.2 146.4 L7.3 140.8" fill="none" stroke="#e8141c" stroke-width="1.9"/>
<line x1="0" y1="155.5" x2="14" y2="155.5" stroke="#9d9d9d" stroke-width="1" shape-rendering="crispEdges"/>
<rect x="-3" y="164.1" width="12.5" height="11.6" fill="url(#gtab)" stroke="#3a6fd0" stroke-width="0.9"/>
<rect x="-3" y="163.6" width="13" height="2.6" fill="url(#gtabh)"/>
<line x1="4.8" y1="166.2" x2="4.8" y2="175.6" stroke="#2f5fc4" stroke-width="0.9"/>
<path d="M-8 340.6 L10.4 348.9 L-8 357.2 Z" fill="url(#gplay)"/>
<line x1="0" y1="362.5" x2="14" y2="362.5" stroke="#9d9d9d" stroke-width="1" shape-rendering="crispEdges"/>
<rect x="7" y="371.9" width="4.8" height="11" fill="#e2e2e2"/>
<rect x="9" y="372.9" width="2.8" height="9" fill="#ededed"/>
<g fill="none" stroke="#585858" stroke-width="1.1">
<path d="M6.9 371.1 V383.5 M6.4 371.6 H12.1 M6.4 383.0 H12.1 M4.2 373.1 H6.9 M4.2 377.7 H6.9 M4.2 380.7 H6.9 M7.9 371.5 v-2 M11.5 371.5 v-2 M7.9 383.1 v2 M11.5 383.1 v2"/>
</g>
<g fill="none" stroke="#9c9c9c" stroke-width="0.9">
<rect x="-1" y="369.7" width="4.3" height="5.6" fill="#ececec"/>
<path d="M0 371.5 H2.4 M0 373.3 H2.4 M3.3 370.1 L5 372.7"/>
<path d="M-1.4 380.1 L0.4 382.1 L2.6 379.1"/>
</g>
<rect x="7" y="393.9" width="4.8" height="11" fill="#e2e2e2"/>
<rect x="9" y="394.9" width="2.8" height="9" fill="#ededed"/>
<g fill="none" stroke="#585858" stroke-width="1.1">
<path d="M6.9 393.1 V405.5 M6.4 393.6 H12.1 M6.4 405.0 H12.1 M4.2 395.1 H6.9 M4.2 399.7 H6.9 M4.2 402.7 H6.9 M7.9 393.5 v-2 M11.5 393.5 v-2 M7.9 405.1 v2 M11.5 405.1 v2"/>
</g>
<g fill="none" stroke="#9c9c9c" stroke-width="0.9">
<rect x="-1" y="391.7" width="4.3" height="5.6" fill="#ececec"/>
<path d="M0 393.5 H2.4 M0 395.3 H2.4 M3.3 392.1 L5 394.7"/>
<path d="M3 400.1 L0.2 402.3 L3 404.5"/>
</g>
<line x1="0" y1="412.5" x2="14" y2="412.5" stroke="#9d9d9d" stroke-width="1" shape-rendering="crispEdges"/>
<rect x="7" y="422.4" width="4.8" height="11" fill="#e2e2e2"/>
<rect x="9" y="423.4" width="2.8" height="9" fill="#ededed"/>
<g fill="none" stroke="#585858" stroke-width="1.1">
<path d="M6.9 421.6 V434 M6.4 422.1 H12.1 M6.4 433.5 H12.1 M4.2 423.6 H6.9 M4.2 428.2 H6.9 M4.2 431.2 H6.9 M7.9 422 v-2 M11.5 422 v-2 M7.9 433.6 v2 M11.5 433.6 v2"/>
</g>
<g fill="none" stroke="#9c9c9c" stroke-width="0.9">
<rect x="-1" y="420.2" width="4.3" height="5.6" fill="#ececec"/>
<path d="M0 422 H2.4 M0 423.8 H2.4 M3.3 420.6 L5 423.2"/>
<path d="M-1.4 430.6 L0.4 432.6 L2.6 429.6"/>
</g>
<line x1="0" y1="440.5" x2="14" y2="440.5" stroke="#9d9d9d" stroke-width="1" shape-rendering="crispEdges"/>
<rect x="-3" y="449.5" width="12.5" height="11.6" fill="url(#gtab)" stroke="#3a6fd0" stroke-width="0.9"/>
<rect x="-3" y="449" width="13" height="2.6" fill="url(#gtabh)"/>
<line x1="4.8" y1="451.6" x2="4.8" y2="461" stroke="#2f5fc4" stroke-width="0.9"/>
<line x1="449" y1="4.5" x2="468" y2="4.5" stroke="#6a6a6a" stroke-width="1" shape-rendering="crispEdges"/>
<line x1="449" y1="5.5" x2="468" y2="5.5" stroke="#fbfbfb" stroke-width="1" shape-rendering="crispEdges"/>
<line x1="449" y1="98.5" x2="468" y2="98.5" stroke="#6a6a6a" stroke-width="1" shape-rendering="crispEdges"/>
<line x1="449" y1="99.5" x2="468" y2="99.5" stroke="#fbfbfb" stroke-width="1" shape-rendering="crispEdges"/>
<line x1="449" y1="192.5" x2="468" y2="192.5" stroke="#6a6a6a" stroke-width="1" shape-rendering="crispEdges"/>
<line x1="449" y1="193.5" x2="468" y2="193.5" stroke="#fbfbfb" stroke-width="1" shape-rendering="crispEdges"/>
<line x1="449" y1="242.5" x2="468" y2="242.5" stroke="#6a6a6a" stroke-width="1" shape-rendering="crispEdges"/>
<line x1="449" y1="243.5" x2="468" y2="243.5" stroke="#fbfbfb" stroke-width="1" shape-rendering="crispEdges"/>
<line x1="452" y1="12.7" x2="463.4" y2="12.7" stroke="#9c9c9c" stroke-width="1.4"/>
<line x1="455" y1="16.1" x2="463.4" y2="16.1" stroke="#8ff05a" stroke-width="2"/>
<line x1="455" y1="19.3" x2="463.4" y2="19.3" stroke="#8ff05a" stroke-width="2"/>
<line x1="455" y1="22.3" x2="463.4" y2="22.3" stroke="#9c9c9c" stroke-width="1.4"/>
<line x1="452" y1="25.2" x2="463.4" y2="25.2" stroke="#9c9c9c" stroke-width="1.4"/>
<path d="M452.8 35.2 C456.2 33.4 459.2 35.6 456.59999999999997 39.4" fill="none" stroke="#2222aa" stroke-width="1.6"/>
<path d="M450.4 33.6 v4.8 h4.8 z" fill="#2222aa"/>
<line x1="455" y1="41.2" x2="464" y2="41.2" stroke="#8ff05a" stroke-width="2"/>
<line x1="455" y1="44.6" x2="464" y2="44.6" stroke="#9c9c9c" stroke-width="1.4"/>
<line x1="452" y1="47.6" x2="464" y2="47.6" stroke="#9c9c9c" stroke-width="1.4"/>
<line x1="452" y1="56.8" x2="463.4" y2="56.8" stroke="#cdcdcd" stroke-width="1.4"/>
<line x1="455" y1="59.8" x2="463.4" y2="59.8" stroke="#cdcdcd" stroke-width="1.4"/>
<line x1="455" y1="63" x2="463.4" y2="63" stroke="#dcdcdc" stroke-width="1.6"/>
<line x1="455" y1="66.3" x2="463.4" y2="66.3" stroke="#cdcdcd" stroke-width="1.4"/>
<line x1="452" y1="69.3" x2="463.4" y2="69.3" stroke="#cdcdcd" stroke-width="1.4"/>
<path d="M452.8 79.2 C456.2 77.4 459.2 79.6 456.59999999999997 83.4" fill="none" stroke="#a9a9a9" stroke-width="1.6"/>
<path d="M450.4 77.6 v4.8 h4.8 z" fill="#a9a9a9"/>
<line x1="455" y1="85.2" x2="464" y2="85.2" stroke="#dcdcdc" stroke-width="1.6"/>
<line x1="455" y1="88.5" x2="464" y2="88.5" stroke="#cdcdcd" stroke-width="1.4"/>
<line x1="452" y1="91.6" x2="464" y2="91.6" stroke="#cdcdcd" stroke-width="1.4"/>
<g transform="translate(0 0)">
<path d="M450.7 117.7 L460.9 107.1" stroke="#1a1a1a" stroke-width="1.2" fill="none"/>
<path d="M455.9 112.7 L460.6 108.7 Q462.7 109.6 462 111.6 Q463 113.6 464.4 114.2 L461.2 117.9 Q459.4 118.4 458 117.2 Q457.8 114.6 455.9 112.7 Z" fill="url(#gflag)"/>
</g>
<g transform="translate(1.2 0)">
<path d="M450.7 141.39999999999998 L460.9 130.79999999999998" stroke="#6e6e6e" stroke-width="1.2" fill="none"/>
<path d="M455.9 136.39999999999998 L460.6 132.39999999999998 Q462.7 133.29999999999998 462 135.29999999999998 Q463 137.29999999999998 464.4 137.89999999999998 L461.2 141.6 Q459.4 142.1 458 140.89999999999998 Q457.8 138.29999999999998 455.9 136.39999999999998 Z" fill="#a6a6a6"/>
</g>
<g transform="translate(1.2 0)">
<path d="M450.7 163.39999999999998 L460.9 152.79999999999998" stroke="#6e6e6e" stroke-width="1.2" fill="none"/>
<path d="M455.9 158.39999999999998 L460.6 154.39999999999998 Q462.7 155.29999999999998 462 157.29999999999998 Q463 159.29999999999998 464.4 159.89999999999998 L461.2 163.6 Q459.4 164.1 458 162.89999999999998 Q457.8 160.29999999999998 455.9 158.39999999999998 Z" fill="#a6a6a6"/>
</g>
<g transform="translate(1.2 0)">
<path d="M450.7 185.39999999999998 L460.9 174.79999999999998" stroke="#6e6e6e" stroke-width="1.2" fill="none"/>
<path d="M455.9 180.39999999999998 L460.6 176.39999999999998 Q462.7 177.29999999999998 462 179.29999999999998 Q463 181.29999999999998 464.4 181.89999999999998 L461.2 185.6 Q459.4 186.1 458 184.89999999999998 Q457.8 182.29999999999998 455.9 180.39999999999998 Z" fill="#a6a6a6"/>
</g>
<path d="M451.8 133.6 q-0.6 -3.4 2.4 -3.6 q2 0 2.6 1.8 m0.2 -1.9 l0 2.2 l-2.2 -0.2" fill="none" stroke="#9a9a9a" stroke-width="1"/>
<path d="M457.4 155.4 q0.6 -3.4 -2.4 -3.6 q-2 0 -2.6 1.8 m-0.2 -1.9 l0 2.2 l2.2 -0.2" fill="none" stroke="#9a9a9a" stroke-width="1"/>
<path d="M451.4 173.6 l4.4 4.4 M455.8 173.6 l-4.4 4.4" fill="none" stroke="#9a9a9a" stroke-width="1"/>
<circle cx="457.8" cy="206.8" r="7.3" fill="url(#ggreen)" stroke="#1c9a1e" stroke-width="1.3"/>
<path d="M462.4 206.8 H454.6 M457.8 203.2 L454.2 206.8 L457.8 210.4" fill="none" stroke="#fff" stroke-width="1.7" stroke-linecap="round" stroke-linejoin="round"/>
<circle cx="457.8" cy="228.8" r="7.3" fill="url(#ggray)" stroke="#8e8e8e" stroke-width="1.3"/>
<path d="M453.2 228.8 H461 M457.8 225.2 L461.4 228.8 L457.8 232.4" fill="none" stroke="#f6f6f6" stroke-width="1.7" stroke-linecap="round" stroke-linejoin="round"/>
<g shape-rendering="crispEdges">
<rect x="445" y="0" width="1" height="619" fill="#fafafa"/>
<rect x="443" y="202" width="2" height="2" fill="#fff"/><rect x="442" y="201" width="2" height="2" fill="#bdbdbd"/><rect x="442" y="201" width="1" height="1" fill="#9c9c9c"/>
<rect x="443" y="207" width="2" height="2" fill="#fff"/><rect x="442" y="206" width="2" height="2" fill="#bdbdbd"/><rect x="442" y="206" width="1" height="1" fill="#9c9c9c"/>
<rect x="443" y="212" width="2" height="2" fill="#fff"/><rect x="442" y="211" width="2" height="2" fill="#bdbdbd"/><rect x="442" y="211" width="1" height="1" fill="#9c9c9c"/>
<rect x="443" y="217" width="2" height="2" fill="#fff"/><rect x="442" y="216" width="2" height="2" fill="#bdbdbd"/><rect x="442" y="216" width="1" height="1" fill="#9c9c9c"/>
<rect x="443" y="222" width="2" height="2" fill="#fff"/><rect x="442" y="221" width="2" height="2" fill="#bdbdbd"/><rect x="442" y="221" width="1" height="1" fill="#9c9c9c"/>
<rect x="443" y="227" width="2" height="2" fill="#fff"/><rect x="442" y="226" width="2" height="2" fill="#bdbdbd"/><rect x="442" y="226" width="1" height="1" fill="#9c9c9c"/>
<rect x="443" y="232" width="2" height="2" fill="#fff"/><rect x="442" y="231" width="2" height="2" fill="#bdbdbd"/><rect x="442" y="231" width="1" height="1" fill="#9c9c9c"/>
<rect x="443" y="237" width="2" height="2" fill="#fff"/><rect x="442" y="236" width="2" height="2" fill="#bdbdbd"/><rect x="442" y="236" width="1" height="1" fill="#9c9c9c"/>
<rect x="443" y="242" width="2" height="2" fill="#fff"/><rect x="442" y="241" width="2" height="2" fill="#bdbdbd"/><rect x="442" y="241" width="1" height="1" fill="#9c9c9c"/>
<rect x="443" y="247" width="2" height="2" fill="#fff"/><rect x="442" y="246" width="2" height="2" fill="#bdbdbd"/><rect x="442" y="246" width="1" height="1" fill="#9c9c9c"/>
<rect x="443" y="252" width="2" height="2" fill="#fff"/><rect x="442" y="251" width="2" height="2" fill="#bdbdbd"/><rect x="442" y="251" width="1" height="1" fill="#9c9c9c"/>
<rect x="443" y="257" width="2" height="2" fill="#fff"/><rect x="442" y="256" width="2" height="2" fill="#bdbdbd"/><rect x="442" y="256" width="1" height="1" fill="#9c9c9c"/>
<rect x="443" y="262" width="2" height="2" fill="#fff"/><rect x="442" y="261" width="2" height="2" fill="#bdbdbd"/><rect x="442" y="261" width="1" height="1" fill="#9c9c9c"/>
<rect x="443" y="267" width="2" height="2" fill="#fff"/><rect x="442" y="266" width="2" height="2" fill="#bdbdbd"/><rect x="442" y="266" width="1" height="1" fill="#9c9c9c"/>
<rect x="443" y="272" width="2" height="2" fill="#fff"/><rect x="442" y="271" width="2" height="2" fill="#bdbdbd"/><rect x="442" y="271" width="1" height="1" fill="#9c9c9c"/>
<rect x="443" y="277" width="2" height="2" fill="#fff"/><rect x="442" y="276" width="2" height="2" fill="#bdbdbd"/><rect x="442" y="276" width="1" height="1" fill="#9c9c9c"/>
<rect x="443" y="282" width="2" height="2" fill="#fff"/><rect x="442" y="281" width="2" height="2" fill="#bdbdbd"/><rect x="442" y="281" width="1" height="1" fill="#9c9c9c"/>
<rect x="443" y="287" width="2" height="2" fill="#fff"/><rect x="442" y="286" width="2" height="2" fill="#bdbdbd"/><rect x="442" y="286" width="1" height="1" fill="#9c9c9c"/>
<rect x="443" y="292" width="2" height="2" fill="#fff"/><rect x="442" y="291" width="2" height="2" fill="#bdbdbd"/><rect x="442" y="291" width="1" height="1" fill="#9c9c9c"/>
<rect x="443" y="297" width="2" height="2" fill="#fff"/><rect x="442" y="296" width="2" height="2" fill="#bdbdbd"/><rect x="442" y="296" width="1" height="1" fill="#9c9c9c"/>
<rect x="443" y="302" width="2" height="2" fill="#fff"/><rect x="442" y="301" width="2" height="2" fill="#bdbdbd"/><rect x="442" y="301" width="1" height="1" fill="#9c9c9c"/>
<rect x="443" y="307" width="2" height="2" fill="#fff"/><rect x="442" y="306" width="2" height="2" fill="#bdbdbd"/><rect x="442" y="306" width="1" height="1" fill="#9c9c9c"/>
<rect x="443" y="312" width="2" height="2" fill="#fff"/><rect x="442" y="311" width="2" height="2" fill="#bdbdbd"/><rect x="442" y="311" width="1" height="1" fill="#9c9c9c"/>
<rect x="443" y="317" width="2" height="2" fill="#fff"/><rect x="442" y="316" width="2" height="2" fill="#bdbdbd"/><rect x="442" y="316" width="1" height="1" fill="#9c9c9c"/>
<rect x="443" y="322" width="2" height="2" fill="#fff"/><rect x="442" y="321" width="2" height="2" fill="#bdbdbd"/><rect x="442" y="321" width="1" height="1" fill="#9c9c9c"/>
<rect x="443" y="327" width="2" height="2" fill="#fff"/><rect x="442" y="326" width="2" height="2" fill="#bdbdbd"/><rect x="442" y="326" width="1" height="1" fill="#9c9c9c"/>
<rect x="443" y="332" width="2" height="2" fill="#fff"/><rect x="442" y="331" width="2" height="2" fill="#bdbdbd"/><rect x="442" y="331" width="1" height="1" fill="#9c9c9c"/>
<rect x="443" y="337" width="2" height="2" fill="#fff"/><rect x="442" y="336" width="2" height="2" fill="#bdbdbd"/><rect x="442" y="336" width="1" height="1" fill="#9c9c9c"/>
<rect x="443" y="342" width="2" height="2" fill="#fff"/><rect x="442" y="341" width="2" height="2" fill="#bdbdbd"/><rect x="442" y="341" width="1" height="1" fill="#9c9c9c"/>
<rect x="443" y="347" width="2" height="2" fill="#fff"/><rect x="442" y="346" width="2" height="2" fill="#bdbdbd"/><rect x="442" y="346" width="1" height="1" fill="#9c9c9c"/>
<rect x="443" y="352" width="2" height="2" fill="#fff"/><rect x="442" y="351" width="2" height="2" fill="#bdbdbd"/><rect x="442" y="351" width="1" height="1" fill="#9c9c9c"/>
<rect x="443" y="357" width="2" height="2" fill="#fff"/><rect x="442" y="356" width="2" height="2" fill="#bdbdbd"/><rect x="442" y="356" width="1" height="1" fill="#9c9c9c"/>
<rect x="443" y="362" width="2" height="2" fill="#fff"/><rect x="442" y="361" width="2" height="2" fill="#bdbdbd"/><rect x="442" y="361" width="1" height="1" fill="#9c9c9c"/>
<rect x="443" y="367" width="2" height="2" fill="#fff"/><rect x="442" y="366" width="2" height="2" fill="#bdbdbd"/><rect x="442" y="366" width="1" height="1" fill="#9c9c9c"/>
<rect x="443" y="372" width="2" height="2" fill="#fff"/><rect x="442" y="371" width="2" height="2" fill="#bdbdbd"/><rect x="442" y="371" width="1" height="1" fill="#9c9c9c"/>
<rect x="443" y="377" width="2" height="2" fill="#fff"/><rect x="442" y="376" width="2" height="2" fill="#bdbdbd"/><rect x="442" y="376" width="1" height="1" fill="#9c9c9c"/>
<rect x="443" y="382" width="2" height="2" fill="#fff"/><rect x="442" y="381" width="2" height="2" fill="#bdbdbd"/><rect x="442" y="381" width="1" height="1" fill="#9c9c9c"/>
<rect x="443" y="387" width="2" height="2" fill="#fff"/><rect x="442" y="386" width="2" height="2" fill="#bdbdbd"/><rect x="442" y="386" width="1" height="1" fill="#9c9c9c"/>
<rect x="443" y="392" width="2" height="2" fill="#fff"/><rect x="442" y="391" width="2" height="2" fill="#bdbdbd"/><rect x="442" y="391" width="1" height="1" fill="#9c9c9c"/>
<rect x="443" y="397" width="2" height="2" fill="#fff"/><rect x="442" y="396" width="2" height="2" fill="#bdbdbd"/><rect x="442" y="396" width="1" height="1" fill="#9c9c9c"/>
<rect x="443" y="402" width="2" height="2" fill="#fff"/><rect x="442" y="401" width="2" height="2" fill="#bdbdbd"/><rect x="442" y="401" width="1" height="1" fill="#9c9c9c"/>
<rect x="443" y="407" width="2" height="2" fill="#fff"/><rect x="442" y="406" width="2" height="2" fill="#bdbdbd"/><rect x="442" y="406" width="1" height="1" fill="#9c9c9c"/>
<rect x="443" y="412" width="2" height="2" fill="#fff"/><rect x="442" y="411" width="2" height="2" fill="#bdbdbd"/><rect x="442" y="411" width="1" height="1" fill="#9c9c9c"/>
<rect x="443" y="417" width="2" height="2" fill="#fff"/><rect x="442" y="416" width="2" height="2" fill="#bdbdbd"/><rect x="442" y="416" width="1" height="1" fill="#9c9c9c"/>
<rect x="443" y="422" width="2" height="2" fill="#fff"/><rect x="442" y="421" width="2" height="2" fill="#bdbdbd"/><rect x="442" y="421" width="1" height="1" fill="#9c9c9c"/>
<rect x="443" y="427" width="2" height="2" fill="#fff"/><rect x="442" y="426" width="2" height="2" fill="#bdbdbd"/><rect x="442" y="426" width="1" height="1" fill="#9c9c9c"/>
<rect x="443" y="432" width="2" height="2" fill="#fff"/><rect x="442" y="431" width="2" height="2" fill="#bdbdbd"/><rect x="442" y="431" width="1" height="1" fill="#9c9c9c"/>
<rect x="443" y="437" width="2" height="2" fill="#fff"/><rect x="442" y="436" width="2" height="2" fill="#bdbdbd"/><rect x="442" y="436" width="1" height="1" fill="#9c9c9c"/>
<rect x="443" y="442" width="2" height="2" fill="#fff"/><rect x="442" y="441" width="2" height="2" fill="#bdbdbd"/><rect x="442" y="441" width="1" height="1" fill="#9c9c9c"/>
<rect x="141" y="333" width="2" height="2" fill="#fff"/><rect x="140" y="332" width="2" height="2" fill="#bdbdbd"/><rect x="140" y="332" width="1" height="1" fill="#9c9c9c"/>
<rect x="146" y="333" width="2" height="2" fill="#fff"/><rect x="145" y="332" width="2" height="2" fill="#bdbdbd"/><rect x="145" y="332" width="1" height="1" fill="#9c9c9c"/>
<rect x="151" y="333" width="2" height="2" fill="#fff"/><rect x="150" y="332" width="2" height="2" fill="#bdbdbd"/><rect x="150" y="332" width="1" height="1" fill="#9c9c9c"/>
<rect x="156" y="333" width="2" height="2" fill="#fff"/><rect x="155" y="332" width="2" height="2" fill="#bdbdbd"/><rect x="155" y="332" width="1" height="1" fill="#9c9c9c"/>
<rect x="161" y="333" width="2" height="2" fill="#fff"/><rect x="160" y="332" width="2" height="2" fill="#bdbdbd"/><rect x="160" y="332" width="1" height="1" fill="#9c9c9c"/>
<rect x="166" y="333" width="2" height="2" fill="#fff"/><rect x="165" y="332" width="2" height="2" fill="#bdbdbd"/><rect x="165" y="332" width="1" height="1" fill="#9c9c9c"/>
<rect x="171" y="333" width="2" height="2" fill="#fff"/><rect x="170" y="332" width="2" height="2" fill="#bdbdbd"/><rect x="170" y="332" width="1" height="1" fill="#9c9c9c"/>
<rect x="176" y="333" width="2" height="2" fill="#fff"/><rect x="175" y="332" width="2" height="2" fill="#bdbdbd"/><rect x="175" y="332" width="1" height="1" fill="#9c9c9c"/>
<rect x="181" y="333" width="2" height="2" fill="#fff"/><rect x="180" y="332" width="2" height="2" fill="#bdbdbd"/><rect x="180" y="332" width="1" height="1" fill="#9c9c9c"/>
<rect x="186" y="333" width="2" height="2" fill="#fff"/><rect x="185" y="332" width="2" height="2" fill="#bdbdbd"/><rect x="185" y="332" width="1" height="1" fill="#9c9c9c"/>
<rect x="191" y="333" width="2" height="2" fill="#fff"/><rect x="190" y="332" width="2" height="2" fill="#bdbdbd"/><rect x="190" y="332" width="1" height="1" fill="#9c9c9c"/>
<rect x="196" y="333" width="2" height="2" fill="#fff"/><rect x="195" y="332" width="2" height="2" fill="#bdbdbd"/><rect x="195" y="332" width="1" height="1" fill="#9c9c9c"/>
<rect x="201" y="333" width="2" height="2" fill="#fff"/><rect x="200" y="332" width="2" height="2" fill="#bdbdbd"/><rect x="200" y="332" width="1" height="1" fill="#9c9c9c"/>
<rect x="206" y="333" width="2" height="2" fill="#fff"/><rect x="205" y="332" width="2" height="2" fill="#bdbdbd"/><rect x="205" y="332" width="1" height="1" fill="#9c9c9c"/>
<rect x="211" y="333" width="2" height="2" fill="#fff"/><rect x="210" y="332" width="2" height="2" fill="#bdbdbd"/><rect x="210" y="332" width="1" height="1" fill="#9c9c9c"/>
<rect x="216" y="333" width="2" height="2" fill="#fff"/><rect x="215" y="332" width="2" height="2" fill="#bdbdbd"/><rect x="215" y="332" width="1" height="1" fill="#9c9c9c"/>
<rect x="221" y="333" width="2" height="2" fill="#fff"/><rect x="220" y="332" width="2" height="2" fill="#bdbdbd"/><rect x="220" y="332" width="1" height="1" fill="#9c9c9c"/>
<rect x="226" y="333" width="2" height="2" fill="#fff"/><rect x="225" y="332" width="2" height="2" fill="#bdbdbd"/><rect x="225" y="332" width="1" height="1" fill="#9c9c9c"/>
<rect x="231" y="333" width="2" height="2" fill="#fff"/><rect x="230" y="332" width="2" height="2" fill="#bdbdbd"/><rect x="230" y="332" width="1" height="1" fill="#9c9c9c"/>
<rect x="236" y="333" width="2" height="2" fill="#fff"/><rect x="235" y="332" width="2" height="2" fill="#bdbdbd"/><rect x="235" y="332" width="1" height="1" fill="#9c9c9c"/>
<rect x="241" y="333" width="2" height="2" fill="#fff"/><rect x="240" y="332" width="2" height="2" fill="#bdbdbd"/><rect x="240" y="332" width="1" height="1" fill="#9c9c9c"/>
<rect x="246" y="333" width="2" height="2" fill="#fff"/><rect x="245" y="332" width="2" height="2" fill="#bdbdbd"/><rect x="245" y="332" width="1" height="1" fill="#9c9c9c"/>
<rect x="251" y="333" width="2" height="2" fill="#fff"/><rect x="250" y="332" width="2" height="2" fill="#bdbdbd"/><rect x="250" y="332" width="1" height="1" fill="#9c9c9c"/>
<rect x="256" y="333" width="2" height="2" fill="#fff"/><rect x="255" y="332" width="2" height="2" fill="#bdbdbd"/><rect x="255" y="332" width="1" height="1" fill="#9c9c9c"/>
<rect x="261" y="333" width="2" height="2" fill="#fff"/><rect x="260" y="332" width="2" height="2" fill="#bdbdbd"/><rect x="260" y="332" width="1" height="1" fill="#9c9c9c"/>
<rect x="266" y="333" width="2" height="2" fill="#fff"/><rect x="265" y="332" width="2" height="2" fill="#bdbdbd"/><rect x="265" y="332" width="1" height="1" fill="#9c9c9c"/>
<rect x="271" y="333" width="2" height="2" fill="#fff"/><rect x="270" y="332" width="2" height="2" fill="#bdbdbd"/><rect x="270" y="332" width="1" height="1" fill="#9c9c9c"/>
<rect x="276" y="333" width="2" height="2" fill="#fff"/><rect x="275" y="332" width="2" height="2" fill="#bdbdbd"/><rect x="275" y="332" width="1" height="1" fill="#9c9c9c"/>
<rect x="281" y="333" width="2" height="2" fill="#fff"/><rect x="280" y="332" width="2" height="2" fill="#bdbdbd"/><rect x="280" y="332" width="1" height="1" fill="#9c9c9c"/>
<rect x="286" y="333" width="2" height="2" fill="#fff"/><rect x="285" y="332" width="2" height="2" fill="#bdbdbd"/><rect x="285" y="332" width="1" height="1" fill="#9c9c9c"/>
</g>
<path d="M29.4 317.6 V325.6 L25.2 321.6 Z" fill="#3c3c3c"/>
<path d="M429.6 317.6 V325.6 L433.8 321.6 Z" fill="#3c3c3c"/>
<g shape-rendering="crispEdges"><rect x="136" y="318" width="1" height="7" fill="url(#ggrip)"/><rect x="137" y="318" width="1" height="8" fill="#f4f4f4"/><rect x="139" y="318" width="1" height="7" fill="url(#ggrip)"/><rect x="140" y="318" width="1" height="8" fill="#f4f4f4"/><rect x="142" y="318" width="1" height="7" fill="url(#ggrip)"/><rect x="143" y="318" width="1" height="8" fill="#f4f4f4"/></g>
</svg>
</body></html>
